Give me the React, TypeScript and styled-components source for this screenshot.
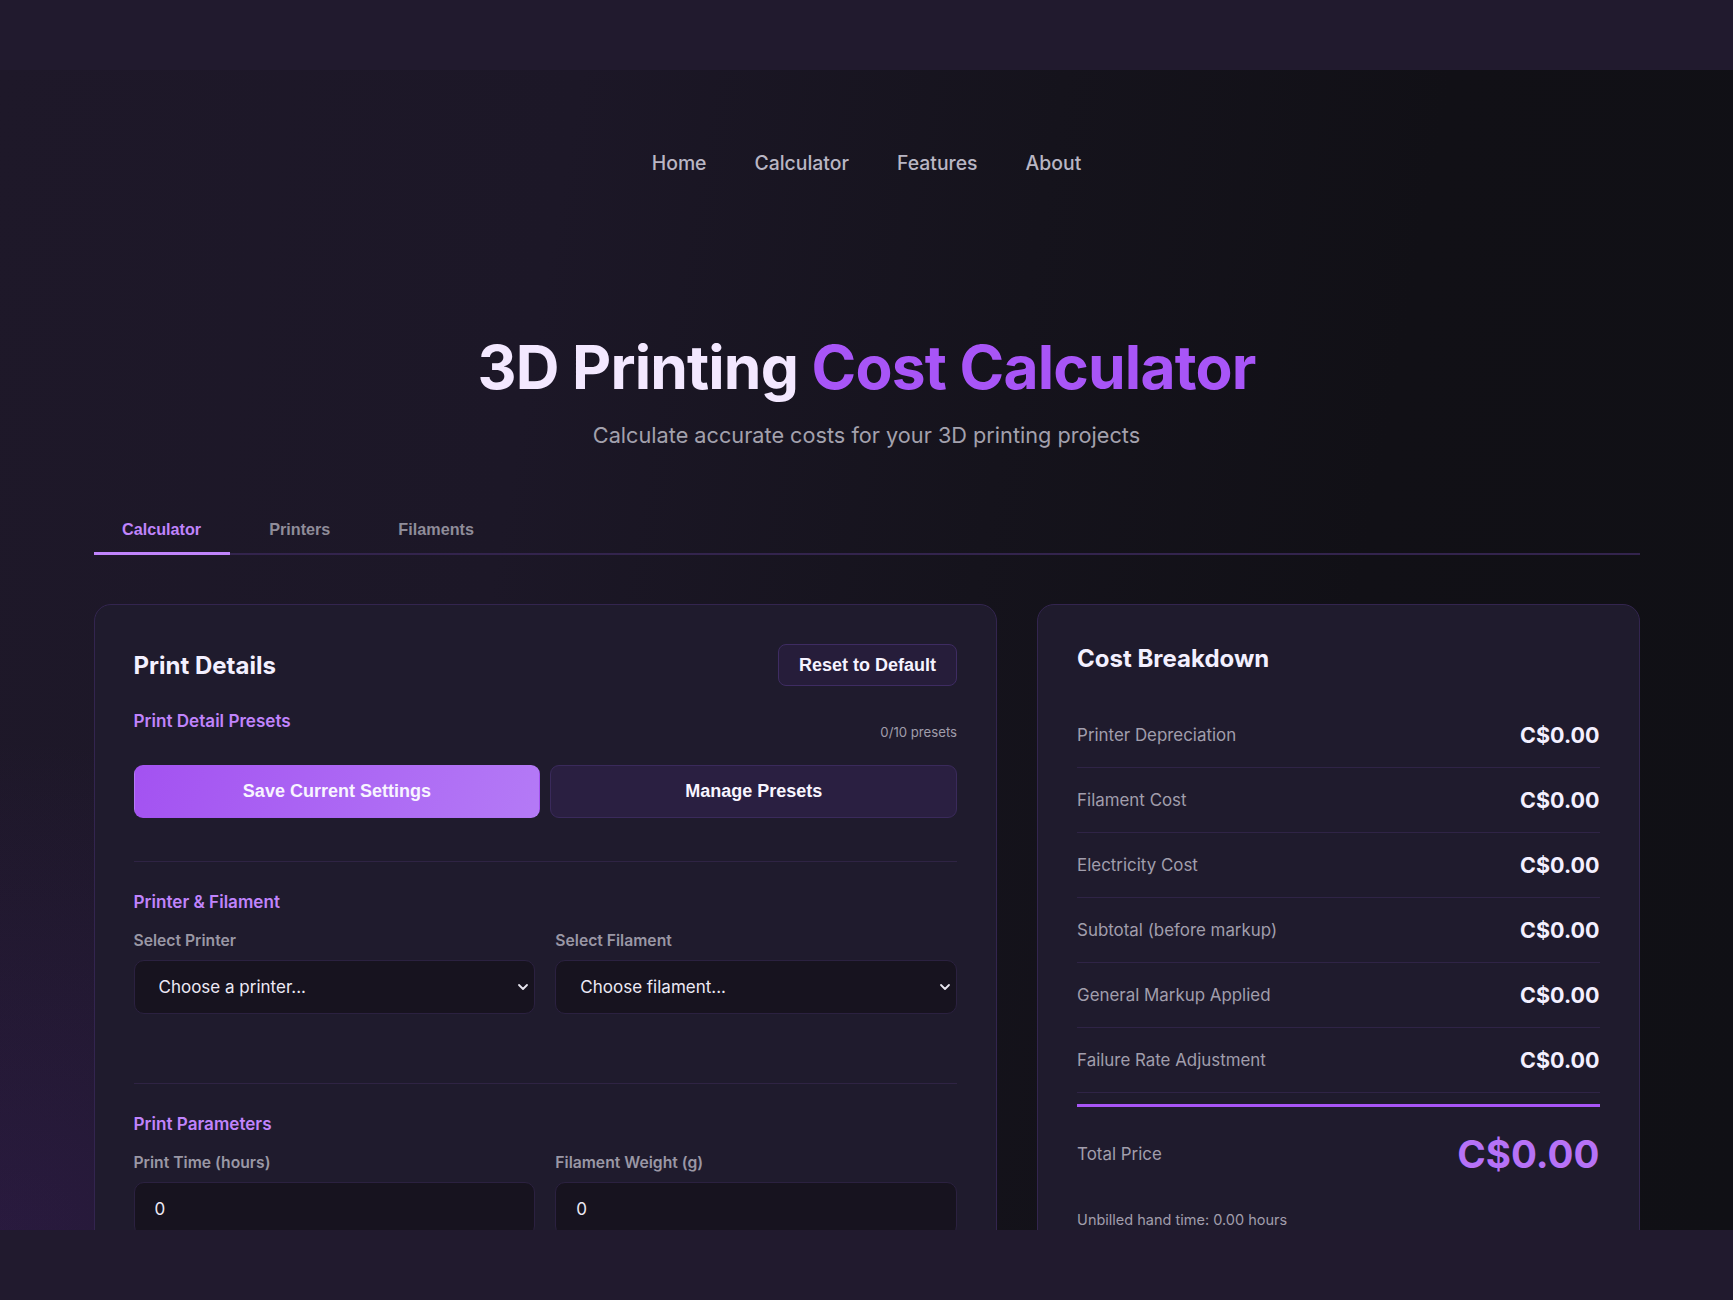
import React from "react";
import styled, { createGlobalStyle } from "styled-components";

const GlobalStyle = createGlobalStyle`
  html, body { margin: 0; padding: 0; }
  body {
    background: #211a2e;
    font-family: Inter, "Noto Sans", sans-serif;
    color: #f3f0ff;
  }
  * { box-sizing: border-box; }
`;

const Page = styled.div`
  padding: 70px 0;
  min-height: 1300px;
`;

const Viewport = styled.div`
  height: 1160px;
  overflow: hidden;
  background:
    radial-gradient(ellipse 900px 700px at 0% 100%, rgba(88, 36, 150, 0.2), transparent 70%),
    linear-gradient(100deg, #1e1829 0%, #1c1727 30%, #15131c 55%, #111016 75%, #101015 100%);
`;

const Nav = styled.nav`
  display: flex;
  justify-content: center;
  gap: 48px;
  padding-top: 78px;
`;

const NavLink = styled.a`
  font-size: 19.4px;
  line-height: 30px;
  font-weight: 500;
  color: #b9b6c4;
  text-decoration: none;
`;

const Hero = styled.header`
  text-align: center;
  margin-top: 153px;
`;

const Title = styled.h1`
  margin: 0;
  font-size: 60.5px;
  line-height: 72px;
  font-weight: 700;
  letter-spacing: -0.014em;
  color: #f3e8ff;
`;

const Accent = styled.span`
  color: #a855f7;
`;

const Subtitle = styled.p`
  margin: 17px 0 0;
  font-size: 21.7px;
  line-height: 30px;
  color: #a3a1ad;
`;

const Container = styled.main`
  width: 1546px;
  margin: 0 auto;
`;

const TabBar = styled.div`
  display: flex;
  gap: 11px;
  margin-top: 55px;
  border-bottom: 2px solid #33244d;
`;

const Tab = styled.button<{ $active?: boolean }>`
  background: none;
  border: none;
  border-bottom: 3px solid ${(p) => (p.$active ? "#c084fc" : "transparent")};
  margin-bottom: -2px;
  padding: 15px 28.5px 13px;
  font-family: "Liberation Sans", Arial, sans-serif;
  font-weight: 700;
  font-size: 16.2px;
  line-height: 19px;
  color: ${(p) => (p.$active ? "#c084fc" : "#8f8c99")};
  cursor: pointer;
`;

const Grid = styled.div`
  display: grid;
  grid-template-columns: 3fr 2fr;
  gap: 40px;
  margin-top: 49px;
  align-items: start;
`;

const Card = styled.section`
  background: #1f1b2d;
  border: 1px solid #33254f;
  border-radius: 17px;
  padding: 39px 39px 60px;
`;

const CardHeader = styled.div`
  display: flex;
  justify-content: space-between;
  align-items: center;
`;

const CardTitle = styled.h2`
  margin: 0;
  font-size: 24px;
  line-height: 29px;
  font-weight: 700;
  color: #f3f0ff;
`;

const GhostButton = styled.button`
  height: 42px;
  padding: 0 20px;
  background: #261d3a;
  border: 1px solid #3e2c62;
  border-radius: 8px;
  font-family: "Liberation Sans", Arial, sans-serif;
  font-weight: 700;
  font-size: 18px;
  color: #f5f3ff;
  cursor: pointer;
`;

const PresetsHeader = styled.div`
  display: flex;
  justify-content: space-between;
  align-items: flex-start;
  margin-top: 23px;
`;

const SectionTitle = styled.h3`
  margin: 0;
  font-size: 17.1px;
  line-height: 24px;
  font-weight: 600;
  color: #c084fc;
`;

const Count = styled.span`
  margin-top: 13px;
  font-size: 13.2px;
  line-height: 20px;
  color: #a09dab;
`;

const ButtonRow = styled.div`
  display: grid;
  grid-template-columns: 1fr 1fr;
  gap: 10px;
  margin-top: 23px;
`;

const ActionButton = styled.button<{ $primary?: boolean }>`
  height: 53px;
  border-radius: 9px;
  border: 1px solid ${(p) => (p.$primary ? "transparent" : "#3a2a5b")};
  background: ${(p) =>
    p.$primary ? "linear-gradient(110deg, #a352f1 0%, #b47af6 100%)" : "#2a1f41"};
  font-family: "Liberation Sans", Arial, sans-serif;
  font-weight: 700;
  font-size: 18px;
  color: #f8f5ff;
  cursor: pointer;
`;

const Divider = styled.hr<{ $top: number }>`
  border: none;
  height: 1px;
  background: #2f2444;
  margin: ${(p) => p.$top}px 0 28px;
`;

const FieldGrid = styled.div`
  display: grid;
  grid-template-columns: 1fr 1fr;
  gap: 20px;
  margin-top: 16px;
`;

const Field = styled.label`
  display: flex;
  flex-direction: column;
  gap: 8px;
`;

const FieldLabel = styled.span`
  font-size: 15.7px;
  line-height: 22px;
  font-weight: 600;
  color: #9a97a5;
`;

const SelectWrap = styled.div`
  position: relative;
`;

const Select = styled.select`
  width: 100%;
  height: 54px;
  appearance: none;
  -webkit-appearance: none;
  background: #17131f;
  border: 1px solid #2b2140;
  border-radius: 10px;
  padding: 0 30px 0 24px;
  font-family: Inter, "Noto Sans", sans-serif;
  font-size: 17px;
  color: #ece9f5;
  outline: none;
`;

const Chevron = styled.svg`
  position: absolute;
  right: 6px;
  top: 50%;
  transform: translateY(-50%);
  pointer-events: none;
`;

const Input = styled.input`
  width: 100%;
  height: 54px;
  background: #17131f;
  border: 1px solid #2b2140;
  border-radius: 10px;
  padding: 0 20px;
  font-family: Inter, "Noto Sans", sans-serif;
  font-size: 17px;
  color: #ece9f5;
  outline: none;
`;

const BreakdownList = styled.div`
  margin-top: 30px;
`;

const Row = styled.div`
  display: flex;
  justify-content: space-between;
  align-items: center;
  padding: 20px 0;
  border-bottom: 1px solid #2f2446;
`;

const RowLabel = styled.span`
  font-size: 16.9px;
  line-height: 24px;
  color: #a19eac;
`;

const RowValue = styled.span`
  font-size: 21.5px;
  line-height: 24px;
  font-weight: 700;
  color: #f3f0ff;
`;

const TotalRow = styled.div`
  display: flex;
  justify-content: space-between;
  align-items: center;
  margin-top: 11px;
  padding-top: 23px;
  border-top: 3px solid #a855f7;
`;

const TotalValue = styled.span`
  font-size: 38.5px;
  line-height: 48px;
  font-weight: 700;
  color: #b672f7;
`;

const Note = styled.p`
  margin: 32px 0 0;
  font-size: 14.5px;
  line-height: 20px;
  color: #a19eac;
`;

const ChevronIcon = () => (
  <Chevron width="12" height="8" viewBox="0 0 12 8" fill="none">
    <path d="M2 2l4 4 4-4" stroke="#e8e6f0" strokeWidth="1.8" strokeLinecap="round" strokeLinejoin="round" />
  </Chevron>
);

const rows = [
  "Printer Depreciation",
  "Filament Cost",
  "Electricity Cost",
  "Subtotal (before markup)",
  "General Markup Applied",
  "Failure Rate Adjustment",
];

export default function App() {
  return (
    <>
      <GlobalStyle />
      <Page>
        <Viewport>
          <Nav>
            <NavLink href="#">Home</NavLink>
            <NavLink href="#">Calculator</NavLink>
            <NavLink href="#">Features</NavLink>
            <NavLink href="#">About</NavLink>
          </Nav>
          <Hero>
            <Title>
              3D Printing <Accent>Cost Calculator</Accent>
            </Title>
            <Subtitle>Calculate accurate costs for your 3D printing projects</Subtitle>
          </Hero>
          <Container>
            <TabBar>
              <Tab $active>Calculator</Tab>
              <Tab>Printers</Tab>
              <Tab>Filaments</Tab>
            </TabBar>
            <Grid>
              <Card>
                <CardHeader>
                  <CardTitle>Print Details</CardTitle>
                  <GhostButton>Reset to Default</GhostButton>
                </CardHeader>
                <PresetsHeader>
                  <SectionTitle>Print Detail Presets</SectionTitle>
                  <Count>0/10 presets</Count>
                </PresetsHeader>
                <ButtonRow>
                  <ActionButton $primary>Save Current Settings</ActionButton>
                  <ActionButton>Manage Presets</ActionButton>
                </ButtonRow>
                <Divider $top={43} />
                <SectionTitle>Printer &amp; Filament</SectionTitle>
                <FieldGrid>
                  <Field>
                    <FieldLabel>Select Printer</FieldLabel>
                    <SelectWrap>
                      <Select defaultValue="">
                        <option value="">Choose a printer...</option>
                      </Select>
                      <ChevronIcon />
                    </SelectWrap>
                  </Field>
                  <Field>
                    <FieldLabel>Select Filament</FieldLabel>
                    <SelectWrap>
                      <Select defaultValue="">
                        <option value="">Choose filament...</option>
                      </Select>
                      <ChevronIcon />
                    </SelectWrap>
                  </Field>
                </FieldGrid>
                <Divider $top={69} />
                <SectionTitle>Print Parameters</SectionTitle>
                <FieldGrid>
                  <Field>
                    <FieldLabel>Print Time (hours)</FieldLabel>
                    <Input type="number" defaultValue={0} />
                  </Field>
                  <Field>
                    <FieldLabel>Filament Weight (g)</FieldLabel>
                    <Input type="number" defaultValue={0} />
                  </Field>
                </FieldGrid>
              </Card>
              <Card>
                <CardTitle>Cost Breakdown</CardTitle>
                <BreakdownList>
                  {rows.map((r) => (
                    <Row key={r}>
                      <RowLabel>{r}</RowLabel>
                      <RowValue>C$0.00</RowValue>
                    </Row>
                  ))}
                </BreakdownList>
                <TotalRow>
                  <RowLabel>Total Price</RowLabel>
                  <TotalValue>C$0.00</TotalValue>
                </TotalRow>
                <Note>Unbilled hand time: 0.00 hours</Note>
              </Card>
            </Grid>
          </Container>
        </Viewport>
      </Page>
    </>
  );
}
